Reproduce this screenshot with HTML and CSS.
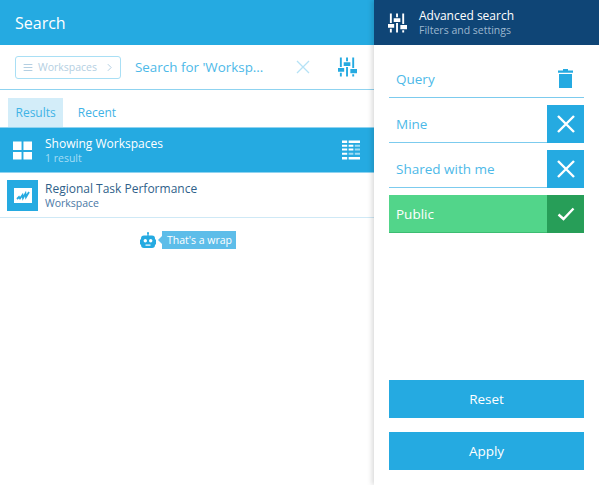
FILE: index.html
```html
<!DOCTYPE html>
<html lang="en">
<head>
  <meta charset="UTF-8" />
  <meta name="viewport" content="width=device-width, initial-scale=1.0" />
  <title>Search</title>
  <link rel="stylesheet" href="styles.css">
</head>
<body>
  <svg class="icon-defs" width="0" height="0">
    <symbol id="sliders" viewBox="0 0 20 20">
      <path d="M2 0h2v10H2zM2 16h2v4H2zM8.500 0h2v4h-2zM8.500 10h2v10h-2zM15 0h2v11h-2zM15 17.500h2V20h-2z"/>
      <path d="M0 11h6.500v4H0zM6 5h7v4H6zM13 12h7v4.500h-7z"/>
    </symbol>
  </svg>

  <main class="search-panel">
    <header class="search-header">Search</header>

    <div class="search-bar">
      <div class="scope-pill">
        <svg class="scope-menu" viewBox="0 0 10 8"><path d="M0 0h10v1.200H0zM0 3.400h10v1.200H0zM0 6.800h10V8H0z"/></svg>
        <span>Workspaces</span>
        <svg class="scope-arrow" viewBox="0 0 6 10"><path d="M1 1l4 4-4 4" /></svg>
      </div>
      <span class="search-text">Search for 'Worksp...</span>
      <svg class="search-clear" viewBox="0 0 14 14"><path d="M1 1l12 12M13 1L1 13" /></svg>
      <svg class="search-sliders"><use href="#sliders" /></svg>
    </div>

    <nav class="tabs">
      <span class="tab tab-active">Results</span>
      <span class="tab">Recent</span>
    </nav>

    <section class="results-head">
      <svg class="grid-icon" viewBox="0 0 20 19"><path d="M0 0h9v9H0zM11 0h9v9h-9zM0 11h9v8H0zM11 11h9v8h-9z"/></svg>
      <div class="row-text">
        <div class="row-title">Showing Workspaces</div>
        <div class="row-sub">1 result</div>
      </div>
      <svg class="table-icon" viewBox="0 0 19 20">
        <path d="M0 0h5.500v2.500H0zM7 0h12v2.500H7zM0 17.500h5.500V20H0zM7 17.500h12V20H7z"/>
        <path d="M0 4.500h5.500v2H0zM0 8.500h5.500v2H0zM0 13h5.500v2H0zM7 4.500h5v2H7zM7 8.500h5v2H7z"/>
        <path class="table-faded" d="M13.500 4.500H19v2h-5.500zM13.500 8.500H19v2h-5.500zM7 13h5v2H7zM13.500 13H19v2h-5.500z"/>
      </svg>
    </section>

    <article class="result-item">
      <div class="workspace-icon">
        <svg viewBox="0 0 18 15">
          <path class="screen" d="M0 0h18v15H0z"/>
          <path class="trend" d="M3 11l2-2 1 1.500 2.500-3.500.5 3 2.500-4.500.5 3.500L15 4"/>
        </svg>
      </div>
      <div class="row-text">
        <div class="item-title">Regional Task Performance</div>
        <div class="item-sub">Workspace</div>
      </div>
    </article>

    <div class="wrap-note">
      <svg class="robot" viewBox="0 0 16 16">
        <circle cx="8" cy="1" r="1"/>
        <path d="M7.300 1h1.400v3h-1.400z"/>
        <path d="M4 3.500h8a3 3 0 0 1 3 3V13a3 3 0 0 1-3 3H4a3 3 0 0 1-3-3V6.500a3 3 0 0 1 3-3z"/>
        <path d="M0 7.500h1v5H0zM15 7.500h1v5h-1z"/>
        <circle class="robot-face" cx="5.300" cy="8.800" r="1.700"/>
        <circle class="robot-face" cx="10.700" cy="8.800" r="1.700"/>
        <path class="robot-face" d="M5.500 12.500h5v1.200h-5z"/>
      </svg>
      <span class="wrap-bubble">That's a wrap</span>
    </div>
  </main>

  <aside class="filter-panel">
    <header class="filter-header">
      <svg class="filter-sliders"><use href="#sliders" /></svg>
      <div>
        <div class="filter-title">Advanced search</div>
        <div class="filter-sub">Filters and settings</div>
      </div>
    </header>

    <div class="filter-body">
      <div class="filter-row">
        <span class="filter-label">Query</span>
        <svg class="trash" viewBox="0 0 15 19">
          <path d="M5 0h5v1.500h5v2.200H0V1.500h5zM1 5h13v14H1z"/>
        </svg>
      </div>

      <div class="filter-row">
        <span class="filter-label">Mine</span>
        <span class="toggle-box">
          <svg viewBox="0 0 18 18"><path d="M1 1l16 16M17 1L1 17" /></svg>
        </span>
      </div>

      <div class="filter-row">
        <span class="filter-label">Shared with me</span>
        <span class="toggle-box">
          <svg viewBox="0 0 18 18"><path d="M1 1l16 16M17 1L1 17" /></svg>
        </span>
      </div>

      <div class="filter-row filter-on">
        <span class="filter-label">Public</span>
        <span class="toggle-box">
          <svg viewBox="0 0 18 14"><path d="M1.500 7.500l5 4.500L16.500 1.500" /></svg>
        </span>
      </div>

      <div class="filter-actions">
        <button class="action-btn">Reset</button>
        <button class="action-btn">Apply</button>
      </div>
    </div>
  </aside>
</body>
</html>
```

FILE: styles.css
```css
:root {
  --blue: #25aae1;
  --navy: #0f4576;
  --line: #7ccbee;
  --text-dark: #2f5f8a;
}

* {
  box-sizing: border-box;
}

html,
body {
  height: 100%;
}

body {
  margin: 0;
  display: flex;
  overflow: hidden;
  font-family: 'Open Sans', 'Noto Sans', sans-serif;
  background: #fff;
  color: var(--blue);
}

.icon-defs {
  position: absolute;
}

.search-panel {
  width: 374px;
  flex: none;
}

.search-header {
  height: 45px;
  padding: 1px 0 0 15px;
  background: var(--blue);
  color: #fff;
  font-size: 16px;
  line-height: 44px;
}

.search-bar {
  display: flex;
  align-items: center;
  height: 45px;
  padding: 0 0 0 15px;
  border-bottom: 1px solid #8fd3f0;
}

.scope-pill {
  display: flex;
  align-items: center;
  width: 106px;
  height: 23px;
  padding: 0 8px 0 7px;
  border: 1px solid #a9dff5;
  border-radius: 3px;
  font-size: 10.500px;
  color: #b4cfe2;
}

.scope-menu {
  width: 10px;
  height: 7px;
  margin-right: 5px;
  fill: #b4cfe2;
}

.scope-arrow {
  width: 5px;
  height: 9px;
  margin-left: auto;
  fill: none;
  stroke: #b4cfe2;
  stroke-width: 1.200;
}

.search-text {
  width: 161px;
  margin-left: 14px;
  font-size: 13.400px;
  white-space: nowrap;
  color: #4db9e8;
}

.search-clear {
  width: 14px;
  height: 14px;
  fill: none;
  stroke: #b5e2f6;
  stroke-width: 1.300;
}

.search-sliders {
  width: 19px;
  height: 20px;
  margin-left: 28px;
  fill: var(--blue);
}

.tabs {
  display: flex;
  gap: 7px;
  height: 37px;
  padding: 8px 0 0 8px;
  font-size: 12px;
}

.tab {
  padding: 0 7.500px;
  line-height: 29px;
  color: #3fb3e6;
}

.tab-active {
  background: #d3edf9;
}

.results-head {
  display: flex;
  align-items: center;
  height: 46px;
  padding: 0 14px 0 13px;
  background: var(--blue);
  border-top: 1px solid #8fd3f0;
  border-bottom: 1px solid #8fd3f0;
  color: #fff;
}

.grid-icon {
  width: 19px;
  height: 19px;
  fill: #fff;
}

.results-head .row-text {
  margin-left: 13px;
}

.row-title {
  font-size: 12px;
  line-height: 16px;
}

.row-sub {
  font-size: 10.500px;
  line-height: 12px;
  color: #a5ddf5;
}

.table-icon {
  width: 18px;
  height: 20px;
  margin-left: auto;
  fill: #fff;
}

.table-faded {
  fill: #9fdcf4;
}

.result-item {
  display: flex;
  align-items: center;
  height: 45px;
  padding-left: 7px;
  border-bottom: 1px solid #cfe9f6;
}

.workspace-icon {
  display: flex;
  align-items: center;
  justify-content: center;
  width: 31px;
  height: 31px;
  background: var(--blue);
}

.workspace-icon svg {
  width: 18px;
  height: 15px;
}

.screen {
  fill: #fff;
}

.trend {
  fill: none;
  stroke: var(--blue);
  stroke-width: 1.800;
}

.result-item .row-text {
  margin-left: 7px;
}

.item-title {
  font-size: 12px;
  line-height: 16px;
  color: var(--text-dark);
}

.item-sub {
  font-size: 10.500px;
  line-height: 12px;
  color: #4a78a6;
}

.wrap-note {
  display: flex;
  align-items: center;
  justify-content: center;
  margin-top: 13px;
  padding-left: 2px;
}

.robot {
  width: 16px;
  height: 16px;
  fill: var(--blue);
}

.robot-face {
  fill: #fff;
}

.wrap-bubble {
  position: relative;
  margin-left: 6px;
  padding: 0 4px 0 5px;
  background: #5dbde9;
  color: #fff;
  font-size: 10.500px;
  line-height: 18px;
}

.wrap-bubble::before {
  content: "";
  position: absolute;
  left: -4px;
  top: 5px;
  border-top: 4px solid transparent;
  border-bottom: 4px solid transparent;
  border-right: 4px solid #5dbde9;
}

.filter-panel {
  display: flex;
  flex-direction: column;
  width: 225px;
  flex: none;
  box-shadow: -2px 0 5px rgba(0, 0, 0, 0.15);
}

.filter-header {
  display: flex;
  align-items: center;
  height: 45px;
  padding-left: 14px;
  background: var(--navy);
  color: #fff;
}

.filter-sliders {
  width: 19px;
  height: 20px;
  margin-right: 12px;
  fill: #fff;
}

.filter-title {
  font-size: 12px;
  line-height: 15px;
}

.filter-sub {
  font-size: 10.500px;
  line-height: 15px;
  color: #9db7cf;
}

.filter-body {
  display: flex;
  flex-direction: column;
  flex: 1;
  padding: 15px;
}

.filter-row {
  display: flex;
  align-items: center;
  justify-content: space-between;
  height: 38px;
  margin-bottom: 7px;
  border-bottom: 1px solid var(--line);
}

.filter-label {
  padding-left: 7px;
  font-size: 13.500px;
  color: #4db9e8;
}

.trash {
  width: 15px;
  height: 19px;
  margin-right: 11px;
  fill: var(--blue);
}

.toggle-box {
  display: flex;
  align-items: center;
  justify-content: center;
  width: 37px;
  height: 38px;
  background: var(--blue);
}

.toggle-box svg {
  width: 18px;
  height: 18px;
  fill: none;
  stroke: #fff;
  stroke-width: 2.400;
}

.filter-on {
  background: #52d58a;
  border-bottom: 1px solid #3cbd72;
}

.filter-on .filter-label {
  color: #fff;
}

.filter-on .toggle-box {
  background: #279e58;
}

.filter-on .toggle-box svg {
  height: 14px;
}

.filter-actions {
  display: flex;
  flex-direction: column;
  gap: 14px;
  margin-top: auto;
}

.action-btn {
  height: 38px;
  padding: 0;
  border: none;
  background: var(--blue);
  color: #fff;
  font-family: inherit;
  font-size: 13.500px;
}
```
